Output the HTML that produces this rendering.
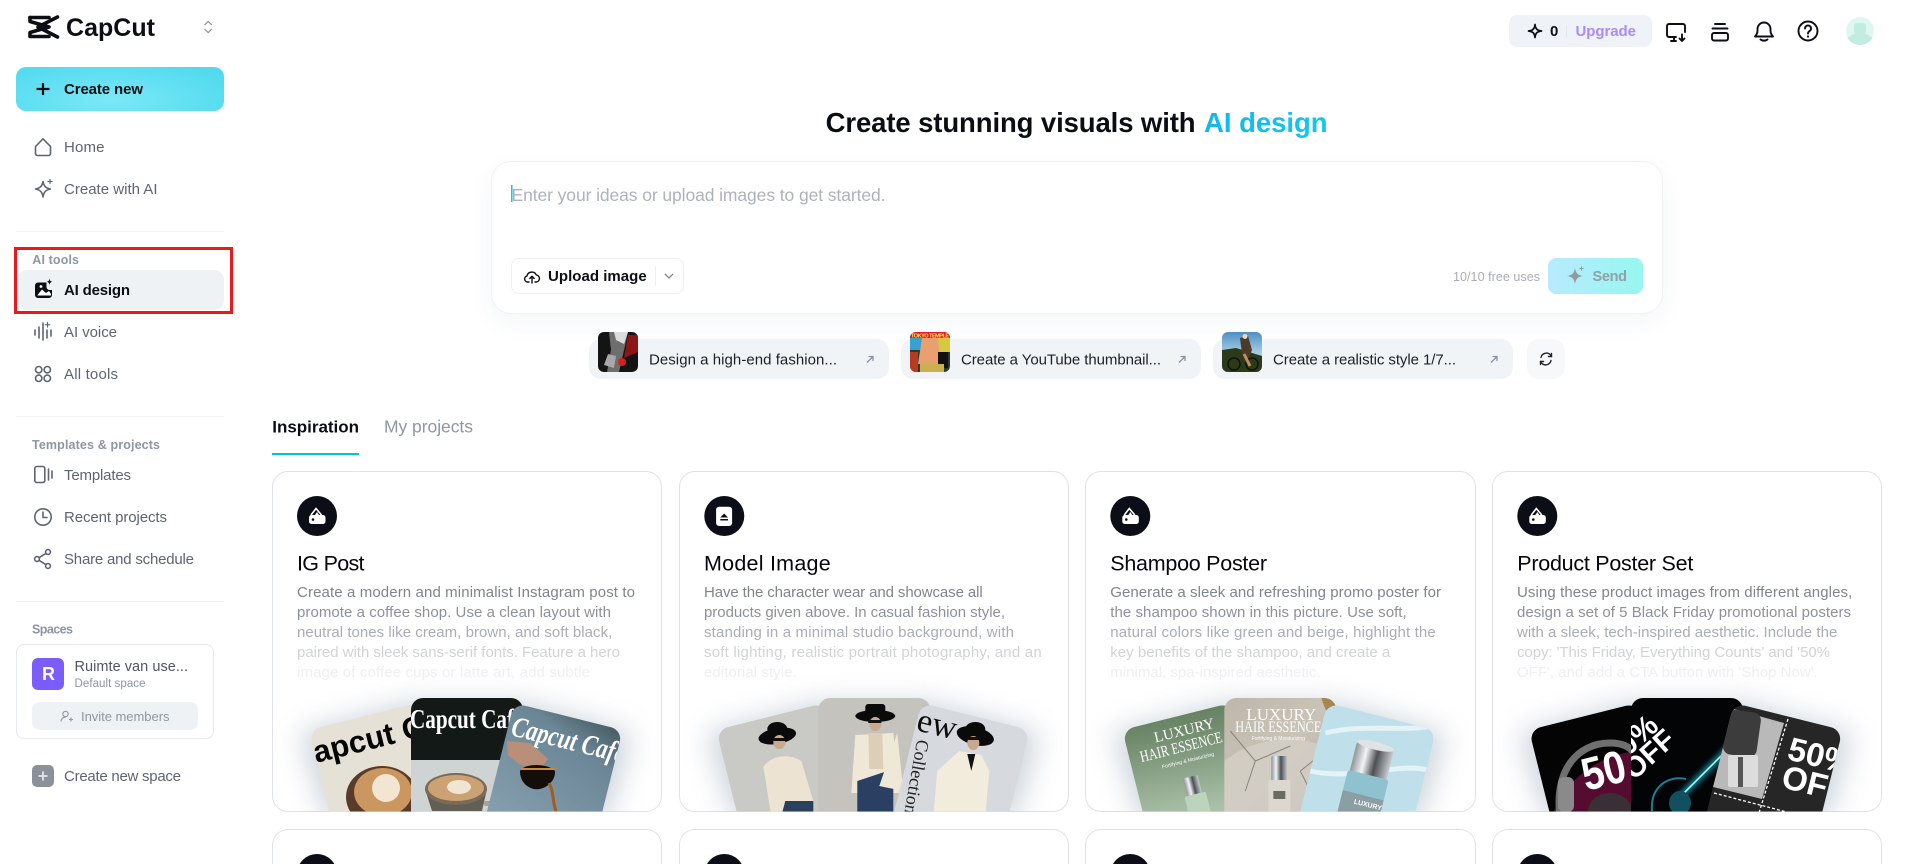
<!DOCTYPE html>
<html lang="en"><head><meta charset="utf-8"><title>CapCut AI design</title>
<style>
html,body{margin:0;padding:0;background:#fff;width:1915px;height:864px;overflow:hidden}
#p{position:relative;width:1915px;height:864px;overflow:hidden;background:#fff}
.a{position:absolute;box-sizing:border-box}
.card{position:absolute;box-sizing:border-box;width:390px;height:341px;border:1px solid #dfe3e8;border-radius:16px;background:#fff}
.card.n{height:35px;border-bottom:0;border-radius:16px 16px 0 0}
.div{position:absolute;left:16px;width:208px;height:1px;background:#f0f2f4}
svg text{font-family:"Liberation Sans",Arial,sans-serif}
.m{font-size:15px;fill:#5e6472}
.h{font-size:12.5px;font-weight:700;fill:#8d96a3}
.d{font-size:15px}
.t{font-size:21.5px;fill:#05070c}
.c{font-size:15px;fill:#1c2028}
svg text.s{font-family:"Liberation Serif",serif}
</style></head><body><div id="p">
<div class="a" style="left:16px;top:67px;width:208px;height:44px;border-radius:10px;background:radial-gradient(ellipse at 45% 75%,#7ce8f7 0%,#62e0f2 50%,#4bd8ec 100%)"></div>
<div class="a" style="left:14px;top:247px;width:219px;height:67px;border:3px solid #e8191f"></div>
<div class="a" style="left:17px;top:270px;width:207px;height:40px;border-radius:10px;background:#eff2f5"></div>
<div class="div" style="top:231px"></div><div class="div" style="top:416px"></div><div class="div" style="top:601px"></div>
<div class="a" style="left:16px;top:644px;width:198px;height:95px;border:1px solid #e6e9ed;border-radius:8px"></div>
<div class="a" style="left:32px;top:658px;width:32px;height:32px;border-radius:6px;background:#7b5cff"></div>
<div class="a" style="left:32px;top:702px;width:166px;height:28px;border-radius:8px;background:#eff2f5"></div>
<div class="a" style="left:32px;top:765px;width:22px;height:22px;border-radius:5px;background:#8a9199"></div>
<div class="a" style="left:1509px;top:15px;width:143px;height:32px;border-radius:8px;background:#eff2f6"></div>
<div class="a" style="left:491px;top:161px;width:1172px;height:153px;border:1px solid #f0f2f4;border-radius:20px;background:#fff;box-shadow:0 8px 24px rgba(40,70,100,.05)"></div>
<div class="a" style="left:511px;top:258px;width:173px;height:36px;border:1px solid #eef0f3;border-radius:8px"></div>
<div class="a" style="left:1548px;top:258px;width:95px;height:36px;border-radius:8px;background:linear-gradient(90deg,#b7ebff,#98f6ef)"></div>
<div class="a" style="left:589px;top:339px;width:300px;height:40px;border-radius:12px;background:#f1f4f7"></div>
<div class="a" style="left:901px;top:339px;width:300px;height:40px;border-radius:12px;background:#f1f4f7"></div>
<div class="a" style="left:1213px;top:339px;width:300px;height:40px;border-radius:12px;background:#f1f4f7"></div>
<div class="a" style="left:1527px;top:339px;width:38px;height:40px;border-radius:12px;background:#f7f8f9"></div>
<div class="a" style="left:272px;top:453px;width:87px;height:2px;background:#00c4dc"></div>
<div class="card" style="left:272px;top:471px"></div><div class="card" style="left:679px;top:471px"></div><div class="card" style="left:1085px;top:471px;width:391px"></div><div class="card" style="left:1492px;top:471px"></div>
<div class="card n" style="left:272px;top:829px"></div><div class="card n" style="left:679px;top:829px"></div><div class="card n" style="left:1085px;top:829px;width:391px"></div><div class="card n" style="left:1492px;top:829px"></div>

<svg class="a" style="left:0;top:0;display:block" width="1915" height="864" viewBox="0 0 1915 864" xmlns="http://www.w3.org/2000/svg">
<defs>
<clipPath id="C"><rect x="0" y="0" width="390" height="340.5" rx="16"/></clipPath>
<clipPath id="L"><rect width="112" height="170" rx="12" transform="translate(37,259) rotate(-14)"/></clipPath>
<clipPath id="M"><rect x="139" y="227" width="112" height="140" rx="12"/></clipPath>
<clipPath id="R"><rect width="112" height="170" rx="12" transform="translate(242,232) rotate(14)"/></clipPath>
<clipPath id="T"><rect width="40" height="40" rx="6"/></clipPath>
<filter id="B" x="-30%" y="-30%" width="160%" height="160%"><feGaussianBlur stdDeviation="14"/></filter>
<filter id="B2" x="-30%" y="-30%" width="160%" height="160%"><feGaussianBlur stdDeviation="3"/></filter>
<linearGradient id="gR1" x1="0" y1="1" x2="1" y2="0"><stop offset="0" stop-color="#8aa3b3"/><stop offset=".6" stop-color="#6b8696"/><stop offset="1" stop-color="#1c2a2a"/></linearGradient>
<linearGradient id="gGr" x1="0" y1="0" x2=".3" y2="1"><stop offset="0" stop-color="#536d4e"/><stop offset=".4" stop-color="#6f8a6b"/><stop offset="1" stop-color="#aac0a8"/></linearGradient>
<linearGradient id="gCh" x1="0" y1="0" x2="1" y2="0"><stop offset="0" stop-color="#8f9498"/><stop offset=".3" stop-color="#f2f4f5"/><stop offset=".6" stop-color="#4c5054"/><stop offset="1" stop-color="#c8ccd0"/></linearGradient>
<linearGradient id="gMb" x1="0" y1="0" x2="1" y2="1"><stop offset="0" stop-color="#bdb5a9"/><stop offset=".5" stop-color="#c9c3b8"/><stop offset="1" stop-color="#a9a397"/></linearGradient>
<linearGradient id="gSk" x1="0" y1="0" x2="0" y2="1"><stop offset="0" stop-color="#4e8fc4"/><stop offset=".5" stop-color="#a5cbe2"/></linearGradient>
<linearGradient id="gAI" x1="0" y1="0" x2="1" y2="0"><stop offset="0" stop-color="#0fb8ef"/><stop offset="1" stop-color="#12c8ee"/></linearGradient>
<g id="gl"><path d="M28 262L140 232H250L360 262L335 348H55Z" fill="#8497aa" opacity=".42" filter="url(#B)"/></g>
<g id="wal"><circle cx="45" cy="45" r="20" fill="#0b0e17"/><path d="M39 44L44 37.5L49.5 44" fill="none" stroke="#fff" stroke-width="1.6"/><path d="M43 44L45 41L47 44Z" fill="#fff"/><rect x="37" y="44" width="16.5" height="9" rx="2.5" fill="#fff"/><circle cx="41" cy="48.5" r="1.3" fill="#0b0e17"/></g>
</defs>

<!-- logo -->
<g fill="none" stroke="#0b0e14" stroke-width="3.6" stroke-linejoin="round" stroke-linecap="round">
<path d="M30 17.5H49M57.5 17L38 27L57.5 37"/><path d="M30 17.500V21.500L49 27L30 32.500V36.500H49"/></g>
<text x="66" y="36" font-size="25" font-weight="700" fill="#0b0e14" textLength="89">CapCut</text>
<path d="M204.5 25l3.7-3.5 3.7 3.5M204.5 29l3.7 3.5 3.7-3.5" fill="none" stroke="#8a9099" stroke-width="1.2"/>

<!-- create new -->
<path d="M43 83V95M36.5 89H49.5" stroke="#0b0e14" stroke-width="2.2" fill="none"/>
<text x="64" y="94" font-size="15" font-weight="700" fill="#0b0e14" textLength="79">Create new</text>

<!-- nav icons -->
<g fill="none" stroke="#5e6472" stroke-width="1.6" stroke-linejoin="round" stroke-linecap="round">
<path d="M35.5 146.5L43 138.8L50.5 146.5V153.5a2 2 0 0 1-2 2H37.5a2 2 0 0 1-2-2Z"/>
<path d="M43 181.5C43.8 186 45.5 188 50.5 189C45.5 190 43.8 192 43 197C42.2 192 40.5 190 35.5 189C40.5 188 42.2 186 43 181.5Z"/>
<path d="M50 179.5v4M48 181.5h4" stroke-width="1.2"/>
<path d="M35 330V335M39 327V338M43 323V340M47 330V338M51 330V336"/>
<path d="M47.5 322.5v4.5M45.3 324.7h4.4" stroke-width="1.2"/>
<circle cx="38.7" cy="369.7" r="3.2"/><circle cx="47.3" cy="369.7" r="3.2"/><circle cx="38.7" cy="378.3" r="3.2"/><circle cx="47.3" cy="378.3" r="3.2"/>
<rect x="34.8" y="466.5" width="10" height="16" rx="2"/><path d="M48.5 469V480M52 471V478"/>
<circle cx="43" cy="517" r="8.2"/><path d="M43 512V517.5H47"/>
<circle cx="48" cy="552" r="2.4"/><circle cx="37" cy="559" r="2.4"/><circle cx="48" cy="566" r="2.4"/><path d="M46 553.3L39 557.7M39 560.3L46 564.7"/>
</g>
<path d="M38 282.5H46.5V287a3 3 0 0 0 3 3H52V295a3 3 0 0 1-3 3H38a3 3 0 0 1-3-3V285.5a3 3 0 0 1 3-3Z" fill="#0b0e14"/>
<path d="M37.5 295L42 289.5L46 293L49 291L51 294V295.5H37.5Z" fill="#fff"/><circle cx="41" cy="286.5" r="1.4" fill="#fff"/>
<path d="M49.5 278.5c.4 2.3 1 3 3.2 3.3c-2.2.4-2.8 1-3.2 3.3c-.4-2.3-1-2.9-3.2-3.3c2.2-.3 2.8-1 3.2-3.3Z" fill="#0b0e14"/>

<text class="m" x="64" y="152" textLength="40.5">Home</text>
<text class="m" x="64" y="194" textLength="93.5">Create with AI</text>
<text class="h" x="32.3" y="264" textLength="46.7">AI tools</text>
<text x="64" y="295" font-size="15" font-weight="700" fill="#0b0e14" textLength="66">AI design</text>
<text class="m" x="64" y="337" textLength="53">AI voice</text>
<text class="m" x="64" y="379" textLength="54">All tools</text>
<text class="h" x="32" y="449" textLength="128">Templates &amp; projects</text>
<text class="m" x="64" y="480" textLength="67">Templates</text>
<text class="m" x="64" y="522" textLength="103">Recent projects</text>
<text class="m" x="64" y="564" textLength="130">Share and schedule</text>
<text class="h" x="32" y="633.5" textLength="41">Spaces</text>
<text x="48.5" y="680" font-size="18" font-weight="700" fill="#fff" text-anchor="middle">R</text>
<text x="74.5" y="671" font-size="14.5" fill="#4f5563" textLength="113.5">Ruimte van use...</text>
<text x="74.5" y="687" font-size="11.5" fill="#8d96a3" textLength="71">Default space</text>
<g fill="none" stroke="#8d96a3" stroke-width="1.1"><circle cx="65.5" cy="714" r="2.7"/><path d="M61 721.5c.3-3 2-4.3 4.5-4.3M69 719.5h4M71 717.5v4"/></g>
<text x="81" y="721" font-size="13" fill="#8d96a3" textLength="88.5">Invite members</text>
<path d="M43 771.5v9M38.5 776h9" stroke="#e4e7ea" stroke-width="1.8"/>
<text class="m" x="64" y="781" textLength="117">Create new space</text>

<!-- top right -->
<path d="M1535 24.5C1535.6 29 1537 30.4 1541.5 31C1537 31.6 1535.6 33 1535 37.5C1534.4 33 1533 31.6 1528.5 31C1533 30.4 1534.4 29 1535 24.5Z" fill="none" stroke="#0b0e14" stroke-width="1.7" stroke-linejoin="round"/>
<text x="1550" y="36" font-size="15" font-weight="700" fill="#0b0e14" textLength="7.5">0</text>
<rect x="1566" y="25" width="1" height="12" fill="#e2e5ea"/>
<text x="1575.5" y="36" font-size="15" font-weight="700" fill="#a98cfa" textLength="60.5">Upgrade</text>
<g fill="none" stroke="#0b0e14" stroke-width="1.9" stroke-linecap="round" stroke-linejoin="round">
<path d="M1676 37H1669a2 2 0 0 1-2-2V26a2 2 0 0 1 2-2H1683a2 2 0 0 1 2 2V32M1671 41H1676M1674 37V41"/>
<path d="M1682 34.5V40.5M1679.5 38.5L1682 41L1684.5 38.5"/>
<path d="M1715 24H1725M1712.5 28.5H1727.5"/><rect x="1712" y="33" width="16" height="7.5" rx="2"/>
<path d="M1755 36.5H1773C1771 34.5 1770.5 33 1770.5 30.5V29a6.5 6.5 0 0 0-13 0V30.5C1757.5 33 1757 34.5 1755 36.5ZM1760.5 39.5c1.8 1.5 5.2 1.5 7 0"/>
<circle cx="1808" cy="31" r="9.5"/><path d="M1805 28.5a3 3 0 1 1 4.6 2.5c-1 .7-1.6 1.2-1.6 2.500"/>
</g>
<circle cx="1808" cy="36.5" r="1.1" fill="#0b0e14"/>
<circle cx="1860" cy="31" r="14" fill="#dff7f1"/><rect x="1854" y="23" width="12" height="11" rx="3" fill="#c2ecdf"/><path d="M1847.5 38c3-3.5 7-4.5 12.5-4.5s9.5 1 12.5 4.5c-3 4.5-7.5 7-12.5 7s-9.5-2.5-12.5-7Z" fill="#c2ecdf"/>

<!-- hero -->
<text x="825.6" y="132" font-size="27.5" font-weight="700" fill="#0a0d14" textLength="370">Create stunning visuals with</text>
<text x="1204" y="132" font-size="27.5" font-weight="700" fill="url(#gAI)" textLength="123.6">AI design</text>
<rect x="511" y="185" width="1.5" height="17" fill="#19c6dc"/>
<text x="511.5" y="201" font-size="17.5" fill="#adb3bb" textLength="374">Enter your ideas or upload images to get started.</text>
<g fill="none" stroke="#0b0e14" stroke-width="1.4" stroke-linecap="round" stroke-linejoin="round"><path d="M529 282H527.5a3 3 0 0 1-.6-5.9a5 5 0 0 1 9.4-1.2a3.6 3.6 0 0 1 .2 7.1H535"/><path d="M532 283V276.5M529.8 278.5L532 276.3L534.2 278.5"/></g>
<text x="548" y="281" font-size="15" font-weight="700" fill="#0b0e14" textLength="98.7">Upload image</text>
<rect x="655" y="266" width="1" height="20" fill="#eef0f3"/>
<path d="M665 274l4 4 4-4" fill="none" stroke="#80868f" stroke-width="1.3"/>
<text x="1453" y="281" font-size="12.5" fill="#a9adb5" textLength="87">10/10 free uses</text>
<path d="M1575 268C1576 273.5 1577.5 275 1583 276C1577.5 277 1576 278.5 1575 284C1574 278.5 1572.5 277 1567 276C1572.5 275 1574 273.5 1575 268Z" fill="#90999d"/>
<path d="M1581.5 266.5v4M1579.5 268.5h4" stroke="#90999d" stroke-width="1"/>
<text x="1592.5" y="281" font-size="14.5" font-weight="700" fill="#93a0a6" textLength="34.5">Send</text>

<!-- chips -->
<text class="c" x="649" y="364.5" textLength="188">Design a high-end fashion...</text>
<text class="c" x="961" y="364.5" textLength="200">Create a YouTube thumbnail...</text>
<text class="c" x="1273" y="364.5" textLength="183">Create a realistic style 1/7...</text>
<g fill="none" stroke="#8b929c" stroke-width="1.3"><path d="M867 362.5L873 356.5M868.5 356.5H873V361"/><path d="M1179 362.5L1185 356.5M1180.5 356.5H1185V361"/><path d="M1491 362.5L1497 356.5M1492.5 356.5H1497V361"/></g>
<g fill="none" stroke="#20242b" stroke-width="1.4" stroke-linecap="round"><path d="M1541 357.5a5.5 5.5 0 0 1 9.5-2.5l1 1.5M1551 360.5a5.5 5.5 0 0 1-9.5 2.5l-1-1.5"/><path d="M1551.5 353.5v3h-3M1540.5 364.5v-3h3"/></g>
<g transform="translate(598,332)" clip-path="url(#T)"><rect width="40" height="40" fill="#141414"/><path d="M11 0H30L27 14L21 40H9L13 18Z" fill="#6e6e6e"/><path d="M16 0H30L26 12L18 8Z" fill="#dcdcdc"/><path d="M10 22L18 24L16 36L6 33Z" fill="#a8a8a8"/><path d="M30 3H40V20L26 26Z" fill="#8c1515"/><circle cx="24" cy="30" r="4" fill="#d62020"/></g>
<g transform="translate(910,332)" clip-path="url(#T)"><rect width="40" height="40" fill="#2e3a30"/><rect width="40" height="6" fill="#e02020"/><text x="1" y="5.5" font-size="5.5" font-weight="700" fill="#ffe060" textLength="38">TOKYO TEMPLE</text><rect y="6" width="14" height="12" fill="#3aa0d0"/><rect x="26" y="6" width="14" height="14" fill="#d8c840"/><path d="M12 6H28L30 32H8Z" fill="#e8a070"/><rect x="28" y="20" width="10" height="16" fill="#111"/><rect y="20" width="8" height="20" fill="#b83a20"/><rect x="10" y="32" width="24" height="8" fill="#c9b050"/></g>
<g transform="translate(1222,332)" clip-path="url(#T)"><rect width="40" height="40" fill="url(#gSk)"/><path d="M0 18L14 16L40 24V40H0Z" fill="#2b3a18"/><path d="M18 6L26 4L30 18L26 28L20 22Z" fill="#4a3a28"/><circle cx="23" cy="4.5" r="2.5" fill="#e8d8c8"/><circle cx="12" cy="32" r="6" fill="none" stroke="#111" stroke-width="1.5"/><circle cx="30" cy="32" r="6" fill="none" stroke="#111" stroke-width="1.5"/><path d="M22 22L28 34" stroke="#c88a60" stroke-width="3"/></g>

<!-- tabs -->
<text x="272.3" y="432.5" font-size="17" font-weight="700" fill="#0b0e14" textLength="86.7">Inspiration</text>
<text x="384" y="432.5" font-size="17.5" fill="#8d97a5" textLength="89">My projects</text>

<!-- card 1 -->
<g transform="translate(272,471)">
<use href="#wal"/>
<g clip-path="url(#C)"><use href="#gl"/>
<g clip-path="url(#L)"><rect y="220" width="200" height="130" fill="#e5e1d7"/>
<text transform="translate(44,292) rotate(-14)" font-size="31" font-weight="700" fill="#050505">apcut C</text>
<ellipse cx="110" cy="326" rx="36" ry="31" fill="#5a3a28"/><ellipse cx="111" cy="321" rx="29" ry="24" fill="#c9975f"/><ellipse cx="114" cy="317" rx="14" ry="14" fill="#f2e6d2"/></g>
<g clip-path="url(#M)"><rect x="130" y="220" width="130" height="70" fill="#131917"/><rect x="130" y="289" width="130" height="60" fill="#d0d3d4"/>
<text class="s" x="138" y="257" font-size="27" font-weight="700" fill="#fff" textLength="104" lengthAdjust="spacingAndGlyphs">Capcut Caf</text>
<path d="M153 318L160 340H210L215 318Z" fill="#605e55"/><ellipse cx="184" cy="318" rx="31" ry="16" fill="#7b6b56"/><ellipse cx="184" cy="317" rx="28" ry="13" fill="#cba274"/><ellipse cx="187" cy="316" rx="12" ry="7" fill="#f0e4d2"/><rect x="212" y="330" width="20" height="5" rx="2" fill="#a9a294"/></g>
<g clip-path="url(#R)"><rect x="200" y="220" width="170" height="130" fill="url(#gR1)"/>
<text class="s" transform="translate(238,264) rotate(14)" font-size="29" font-weight="700" font-style="italic" fill="#fff" textLength="116" lengthAdjust="spacingAndGlyphs">Capcut Cafe</text>
<path d="M235 270L258 272L276 288L270 296L248 294L236 284Z" fill="#b98f7a"/>
<path d="M248 300C252 292 276 292 283 300C284 312 270 320 262 318C254 316 248 310 248 300Z" fill="#130e0a"/><path d="M249 298H283" stroke="#c8893a" stroke-width="2"/>
<path d="M277 312C282 320 280 330 284 340" stroke="#a55c18" stroke-width="3" fill="none"/></g>
</g>
<text class="t" x="25" y="99.5" textLength="67.5">IG Post</text>
<g class="d"><text x="25" y="126" fill="#7f848e" textLength="338">Create a modern and minimalist Instagram post to</text>
<text x="25" y="146" fill="#8d919a" textLength="314">promote a coffee shop. Use a clean layout with</text>
<text x="25" y="166" fill="#a9adb4" textLength="315.3">neutral tones like cream, brown, and soft black,</text>
<text x="25" y="186" fill="#d0d3d7" textLength="323">paired with sleek sans-serif fonts. Feature a hero</text>
<text x="25" y="206" fill="#eeeff1" textLength="293">image of coffee cups or latte art, add subtle</text></g>
</g>

<!-- card 2 -->
<g transform="translate(679.3,471)">
<circle cx="45" cy="45" r="20" fill="#0b0e17"/><rect x="36.8" y="35.7" width="16" height="19.3" rx="3" fill="#fff"/><path d="M41 46.5L44.8 42.5L48.7 46.5Z" fill="#0b0e17"/><rect x="41" y="48" width="7.7" height="1.5" fill="#0b0e17"/>
<g clip-path="url(#C)"><use href="#gl"/>
<g clip-path="url(#L)"><rect y="220" width="200" height="130" fill="#c9c9c5"/>
<path d="M84 296C92 284 110 282 122 290L134 330L130 345H92Z" fill="#ece3d2"/><path d="M106 330H134V345H102Z" fill="#2c3f5e"/>
<ellipse cx="98" cy="265" rx="19" ry="8" fill="#0a0a0a" transform="rotate(-10 98 265)"/><ellipse cx="98" cy="258" rx="10" ry="7" fill="#0a0a0a"/><ellipse cx="100" cy="271" rx="6" ry="7" fill="#c9a88e"/><rect x="93" y="267" width="13" height="3" fill="#111"/></g>
<g clip-path="url(#M)"><rect x="130" y="220" width="130" height="130" fill="#c4c3be"/>
<path d="M176 264L214 262L218 300L222 322H172Z" fill="#efe8d7"/><path d="M189 262H203L204 298H190Z" fill="#dccfb7"/><path d="M178 310L214 298L214 345H178Z" fill="#2a3f62"/>
<path d="M200 315L218 262L224 320Z" fill="#efe8d7"/>
<ellipse cx="196" cy="245" rx="20" ry="6" fill="#0a0a0a"/><rect x="186" y="233" width="20" height="12" rx="3" fill="#0a0a0a"/><ellipse cx="196" cy="253" rx="6" ry="7" fill="#c9a88e"/><rect x="189" y="249" width="13" height="3" fill="#111"/></g>
<g clip-path="url(#R)"><rect x="200" y="220" width="170" height="130" fill="#d6d9dd"/>
<text class="s" transform="translate(236,259) rotate(14)" font-size="34" fill="#0b0b0b">ew</text>
<text class="s" transform="translate(238,268) rotate(100)" font-size="18" fill="#222">Collection</text>
<path d="M258 300L280 280L302 284L310 300L306 345H254Z" fill="#f2ecdd"/><path d="M288 283H296L292 300Z" fill="#111"/>
<ellipse cx="296" cy="265" rx="19" ry="9" fill="#0a0a0a" transform="rotate(14 296 265)"/><ellipse cx="296" cy="258" rx="10" ry="7" fill="#0a0a0a"/><ellipse cx="294" cy="272" rx="6" ry="7" fill="#c9a88e"/><rect x="288" y="266" width="12" height="3" fill="#111"/></g>
</g>
<text class="t" x="24.7" y="99.5" textLength="126.7">Model Image</text>
<g class="d"><text x="24.7" y="126" fill="#7f848e" textLength="278.7">Have the character wear and showcase all</text>
<text x="24.7" y="146" fill="#8d919a" textLength="301">products given above. In casual fashion style,</text>
<text x="24.7" y="166" fill="#a9adb4" textLength="310">standing in a minimal studio background, with</text>
<text x="24.7" y="186" fill="#d0d3d7" textLength="337.7">soft lighting, realistic portrait photography, and an</text>
<text x="24.7" y="206" fill="#eeeff1" textLength="92.7">editorial style.</text></g>
</g>

<!-- card 3 -->
<g transform="translate(1085.3,471)">
<use href="#wal"/>
<g clip-path="url(#C)"><use href="#gl"/>
<g clip-path="url(#L)"><rect y="220" width="200" height="130" fill="url(#gGr)"/>
<text class="s" transform="translate(100,264) rotate(-14)" font-size="15" fill="#fff" text-anchor="middle">LUXURY</text>
<text class="s" transform="translate(97,281) rotate(-14)" font-size="16" fill="#fff" text-anchor="middle" textLength="84" lengthAdjust="spacingAndGlyphs">HAIR ESSENCE</text>
<text transform="translate(103,291) rotate(-14)" font-size="5" fill="#fff" text-anchor="middle">Fortifying &amp; Moisturizing</text>
<g transform="rotate(-14 110 320)"><rect x="101" y="305" width="15" height="18" rx="1" fill="url(#gCh)"/><rect x="98" y="323" width="22" height="24" rx="2" fill="#bcd4bc"/></g></g>
<g clip-path="url(#M)"><rect x="130" y="220" width="130" height="130" fill="url(#gMb)"/>
<path d="M139 290C170 265 215 262 251 280V345H139Z" fill="#d5d0c7" opacity=".8"/>
<path d="M145 260L170 290L160 320M170 290L205 275M215 300L240 280M230 330L215 300" fill="none" stroke="#8a8478" stroke-width="1"/>
<path d="M236 227H251V250C245 248 240 240 236 227Z" fill="#a8854e"/>
<text class="s" x="196" y="249" font-size="17" fill="#fff" text-anchor="middle">LUXURY</text>
<text class="s" x="193" y="261" font-size="16" fill="#fff" text-anchor="middle" textLength="86" lengthAdjust="spacingAndGlyphs">HAIR ESSENCE</text>
<text x="193" y="269" font-size="5" fill="#fff" text-anchor="middle">Fortifying &amp; Moisturizing</text>
<rect x="186" y="285" width="16" height="25" rx="1" fill="url(#gCh)"/><rect x="183" y="309" width="22" height="34" rx="2" fill="#ddd8cd"/><rect x="188" y="320" width="12" height="8" fill="#6d6a62"/></g>
<g clip-path="url(#R)"><rect x="200" y="220" width="170" height="130" fill="#bfe0ea"/>
<path d="M240 262C280 252 320 262 350 254M225 300C265 310 320 290 345 300" stroke="#e4f3f7" stroke-width="5" fill="none"/>
<g transform="rotate(14 284 300)"><rect x="265" y="274" width="38" height="32" rx="3" fill="url(#gCh)"/><ellipse cx="284" cy="274" rx="19" ry="4" fill="#dfe3e5"/><rect x="263" y="304" width="42" height="45" rx="3" fill="#8fc2cf"/><rect x="263" y="325" width="42" height="30" fill="#8a9ea3"/></g>
<text transform="translate(282,336) rotate(14)" font-size="7" font-weight="700" fill="#fff" text-anchor="middle">LUXURY</text></g>
</g>
<text class="t" x="25" y="99.5" textLength="156.7">Shampoo Poster</text>
<g class="d"><text x="25" y="126" fill="#7f848e" textLength="330.7">Generate a sleek and refreshing promo poster for</text>
<text x="25" y="146" fill="#8d919a" textLength="296.4">the shampoo shown in this picture. Use soft,</text>
<text x="25" y="166" fill="#a9adb4" textLength="325.4">natural colors like green and beige, highlight the</text>
<text x="25" y="186" fill="#d0d3d7" textLength="280">key benefits of the shampoo, and create a</text>
<text x="25" y="206" fill="#eeeff1" textLength="210.4">minimal, spa-inspired aesthetic.</text></g>
</g>

<!-- card 4 -->
<g transform="translate(1492,471)">
<use href="#wal" transform="translate(.3,0)"/>
<g clip-path="url(#C)"><use href="#gl"/>
<g clip-path="url(#L)"><rect y="220" width="200" height="130" fill="#040404"/>
<path d="M60 345C70 315 100 285 145 280V345Z" fill="#560b31"/>
<path d="M68 345C62 300 85 272 118 272C130 272 138 276 142 282" fill="none" stroke="#6f6f6f" stroke-width="7"/>
<rect x="66" y="306" width="16" height="35" rx="6" fill="#8a8a8a"/><ellipse cx="118" cy="340" rx="22" ry="18" fill="#3a2f34"/>
<text transform="translate(94,320) rotate(-14)" font-size="46" font-weight="700" fill="#fff" textLength="44" lengthAdjust="spacingAndGlyphs">50</text></g>
<g clip-path="url(#M)"><rect x="130" y="220" width="130" height="130" fill="#030405"/>
<text transform="translate(136,286) rotate(-42)" font-size="30" font-weight="700" fill="#fff">0%</text>
<text transform="translate(142,310) rotate(-42)" font-size="29" font-weight="700" fill="#fff">OFF</text>
<path d="M238 276L185 329" stroke="#19cfe8" stroke-width="6" opacity=".7" filter="url(#B2)"/><path d="M238 276L185 329" stroke="#a8f6ff" stroke-width="1.6"/>
<path d="M160 340C158 316 176 304 194 308" fill="none" stroke="#1a8199" stroke-width="2"/><ellipse cx="188" cy="332" rx="11" ry="12" fill="#12505f"/></g>
<g clip-path="url(#R)"><rect x="200" y="220" width="170" height="130" fill="#262626"/>
<path d="M220 232L292 252L270 328L205 312Z" fill="#b9b9b9"/>
<rect x="233" y="240" width="34" height="45" rx="8" fill="#3c3c3c" transform="rotate(8 250 262)"/>
<rect x="236" y="284" width="30" height="32" rx="2" fill="#dcdcdc"/><rect x="246" y="286" width="5" height="30" fill="#555"/>
<path d="M296 248L266 345M222 322L310 345" stroke="#fff" stroke-width="1.3" stroke-dasharray="3 2" fill="none"/>
<text transform="translate(294,288) rotate(14)" font-size="33" font-weight="700" fill="#fff">50%</text>
<text transform="translate(288,316) rotate(14)" font-size="33" font-weight="700" fill="#fff">OFF</text></g>
</g>
<text class="t" x="25.3" y="99.5" textLength="176">Product Poster Set</text>
<g class="d"><text x="25" y="126" fill="#7f848e" textLength="335.3">Using these product images from different angles,</text>
<text x="25" y="146" fill="#8d919a" textLength="334">design a set of 5 Black Friday promotional posters</text>
<text x="25" y="166" fill="#a9adb4" textLength="320.3">with a sleek, tech-inspired aesthetic. Include the</text>
<text x="25" y="186" fill="#d0d3d7" textLength="313">copy: 'This Friday, Everything Counts' and '50%</text>
<text x="25" y="206" fill="#eeeff1" textLength="300.7">OFF', and add a CTA button with 'Shop Now'.</text></g>
</g>

<!-- second row circles -->
<use href="#wal" transform="translate(272,829)"/><use href="#wal" transform="translate(679.3,829)"/><use href="#wal" transform="translate(1085.3,829)"/><use href="#wal" transform="translate(1492.3,829)"/>
</svg>
</div></body></html>
